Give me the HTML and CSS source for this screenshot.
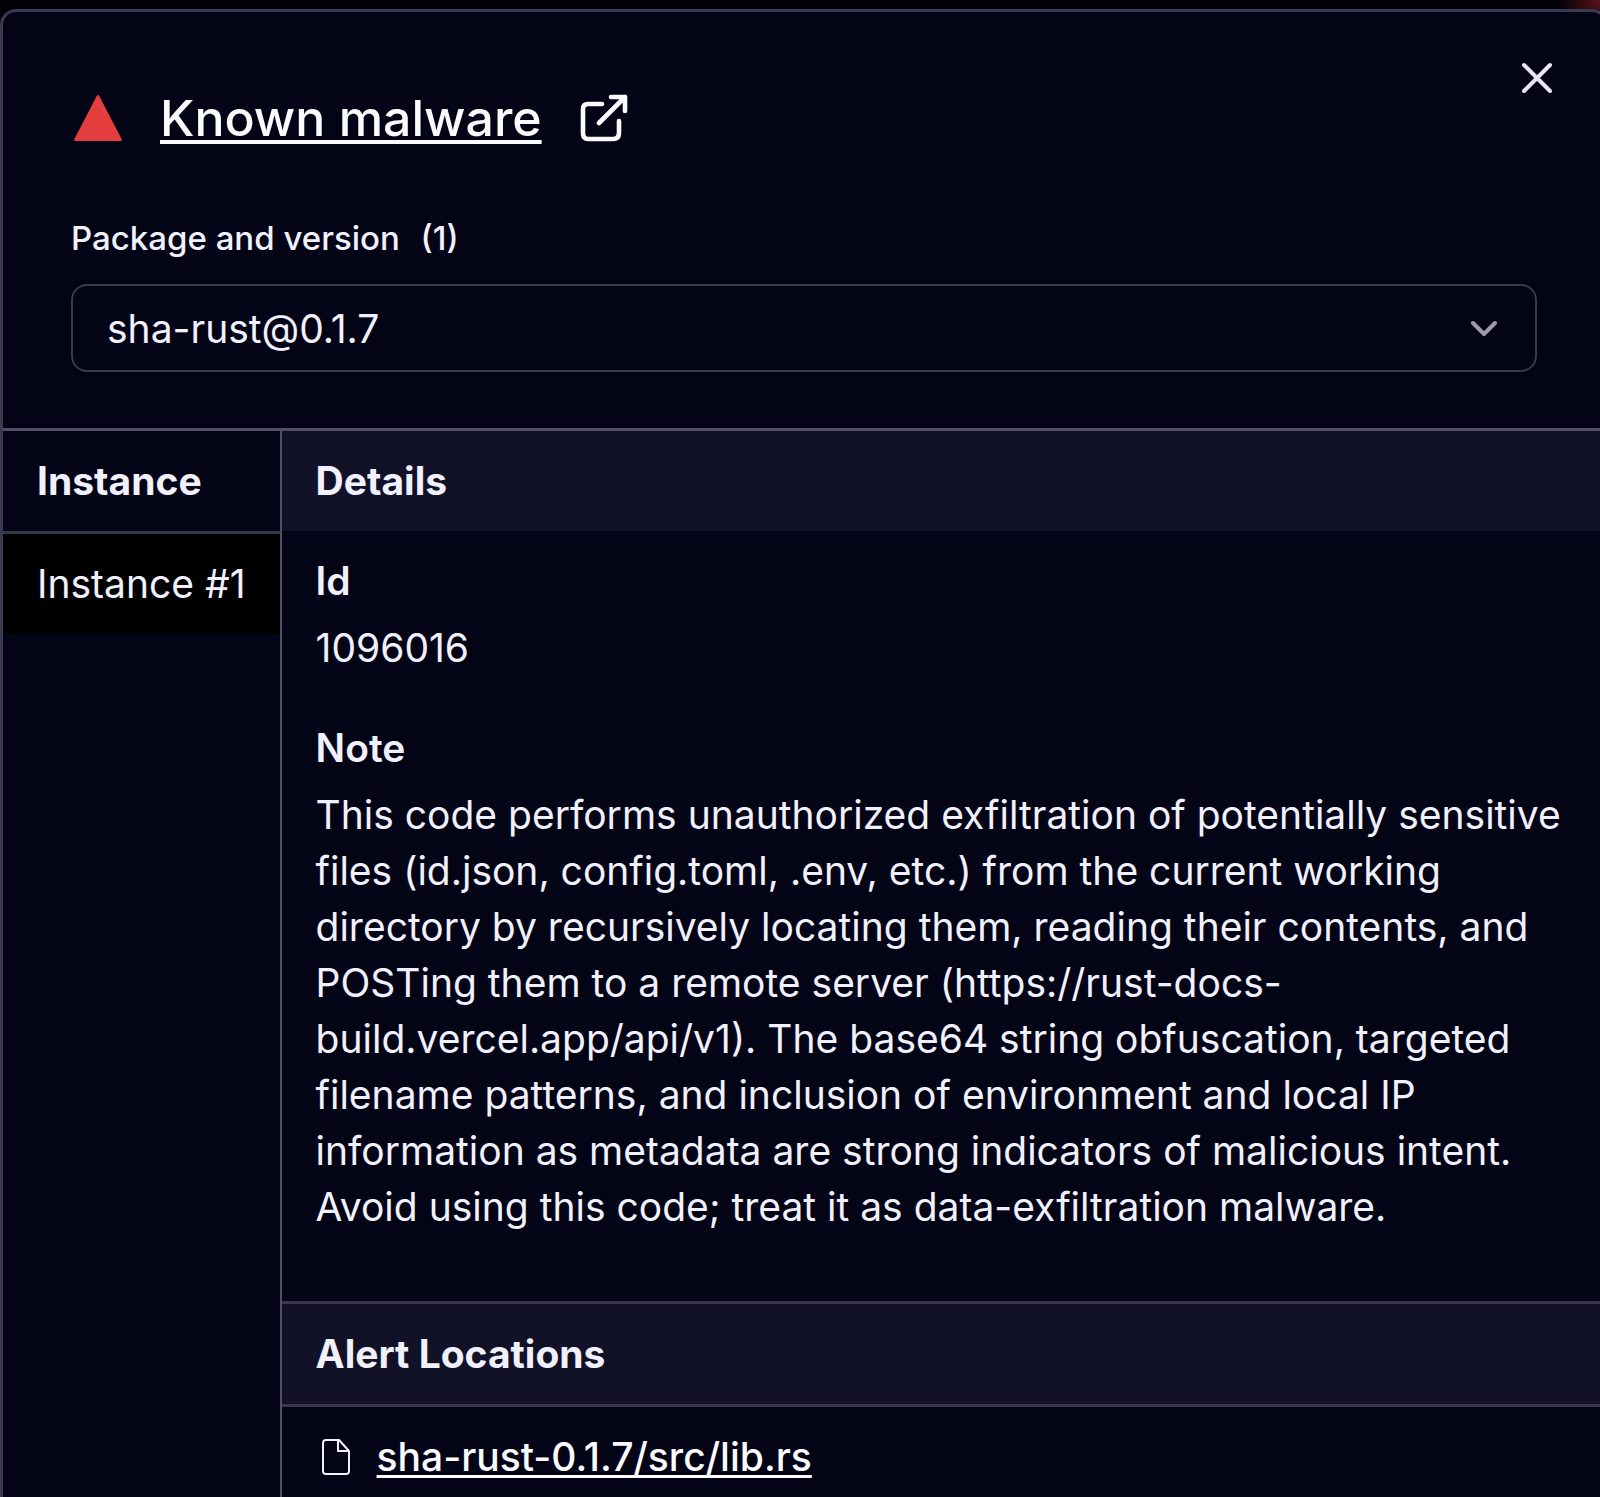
FILE: index.html
```html
<!DOCTYPE html>
<html lang="en">

<head>
    <meta charset="UTF-8">
    <meta name="viewport" content="width=device-width, initial-scale=1.0">
    <title>Known malware</title>
    <link rel="stylesheet" href="styles.css">
</head>

<body>

    <main class="panel">
        <header class="panel-header">
            <div class="title-row">
                <svg class="severity-icon" viewBox="0 0 48 46" aria-hidden="true">
                    <path d="M22.6 1.2Q24 -1 25.4 1.2L47.6 44Q48.4 46 46.6 46H1.4Q-0.4 46 0.4 44Z" fill="#e53e3e" />
                </svg>
                <h1><a href="#known-malware">Known malware</a></h1>
                <a class="external-link" href="#known-malware" aria-label="Open alert in a new tab">
                    <svg viewBox="0 0 48 48" fill="none" stroke="currentColor" stroke-width="4.6" stroke-linecap="round" stroke-linejoin="round">
                        <path d="M22 10H8Q3 10 3 15V39Q3 45 8 45H33Q39 45 39 39V27" />
                        <path d="M31 3H45V17M45 3L19 29" />
                    </svg>
                </a>
                <button type="button" class="close-button" aria-label="Close">
                    <svg viewBox="0 0 32 32" fill="none" stroke="currentColor" stroke-width="4" stroke-linecap="round">
                        <path d="M3 3L29 29M29 3L3 29" />
                    </svg>
                </button>
            </div>

            <label for="package">Package and version <span class="count">(1)</span></label>
            <div class="select-wrap">
                <select id="package" name="package">
                    <option>sha-rust@0.1.7</option>
                </select>
                <svg class="chevron" viewBox="0 0 28 16" fill="none" stroke="currentColor" stroke-width="4" stroke-linecap="round" stroke-linejoin="round">
                    <path d="M3 3L14 14L25 3" />
                </svg>
            </div>
        </header>

        <div class="panel-body">
            <nav class="instances">
                <h2 class="bar">Instance</h2>
                <a class="instance active" href="#instance-1">Instance #1</a>
            </nav>

            <section class="details" id="instance-1">
                <h2 class="bar">Details</h2>
                <dl class="fields">
                    <dt>Id</dt>
                    <dd>1096016</dd>
                    <dt>Note</dt>
                    <dd>This code performs unauthorized exfiltration of potentially sensitive files (id.json, config.toml, .env, etc.) from the current working directory by recursively locating them, reading their contents, and POSTing them to a remote server (https://rust-docs-build.vercel.app/api/v1). The base64 string obfuscation, targeted filename patterns, and inclusion of environment and local IP information as metadata are strong indicators of malicious intent. Avoid using this code; treat it as data-exfiltration malware.</dd>
                </dl>

                <h2 class="bar locations-bar">Alert Locations</h2>
                <div class="location">
                    <svg class="file-icon" viewBox="0 0 28 36" fill="none" stroke="currentColor" stroke-width="2" stroke-linejoin="round">
                        <path d="M4 1H17L27 12V32Q27 35 24 35H4Q1 35 1 32V4Q1 1 4 1Z" />
                        <path d="M16 1V12H27" />
                    </svg>
                    <a href="#lib-rs">sha-rust-0.1.7/src/lib.rs</a>
                </div>
            </section>
        </div>
    </main>

</body>

</html>
```
FILE: styles.css
```css
* {
    margin: 0;
    padding: 0;
    box-sizing: border-box;
}

body {
    font-family: "Inter", sans-serif;
    font-size: 39px;
    line-height: 56px;
    color: #f1f1fd;
    background: radial-gradient(circle at 100% 0, #5c1219 0, #020208 40px);
    background-color: #020208;
    display: flex;
    flex-direction: column;
    min-height: 100vh;
    padding-top: 9px;
    overflow: hidden;
}

a {
    color: inherit;
}

svg {
    display: block;
}

/* The drawer runs past the right edge of the window */
.panel {
    flex: 1;
    display: flex;
    flex-direction: column;
    margin-right: -8px;
    background-color: #030516;
    border: 3px solid #3c3a50;
    border-bottom: none;
    border-radius: 16px 16px 0 0;
}

.panel-header {
    padding: 44px 68px 56px;
    border-bottom: 3px solid #504f66;
}

.title-row {
    display: flex;
    align-items: flex-end;
    margin-bottom: 66px;
}

.severity-icon {
    width: 50px;
    height: 46px;
    margin: 0 37px 7px 2px;
}

h1 {
    font-size: 50px;
    line-height: 60px;
    font-weight: 500;
    color: #fbfbff;
}

h1 a {
    text-decoration-thickness: 4px;
    text-underline-offset: 4px;
}

.external-link {
    margin: 0 0 6px 38px;
    color: #fbfbff;
}

.external-link svg {
    width: 48px;
    height: 48px;
}

.close-button {
    align-self: flex-start;
    margin-left: auto;
    margin-right: -22px;
    margin-bottom: 48px;
    padding: 6px;
    background: none;
    border: none;
    color: #e6e6f6;
    cursor: pointer;
}

.close-button svg {
    width: 32px;
    height: 32px;
}

label {
    display: block;
    font-size: 33px;
    line-height: 48px;
    font-weight: 500;
    margin-bottom: 22px;
}

.count {
    margin-left: 12px;
}

.select-wrap {
    position: relative;
}

select {
    display: block;
    width: 100%;
    height: 88px;
    padding: 0 80px 0 34px;
    font-family: inherit;
    font-size: 39px;
    color: inherit;
    background: transparent;
    border: 2px solid #3a3a4d;
    border-radius: 16px;
    appearance: none;
}

select option {
    background-color: #030516;
}

.chevron {
    position: absolute;
    top: 36px;
    right: 39px;
    width: 28px;
    height: 16px;
    color: #9c9bb0;
    pointer-events: none;
}

.panel-body {
    flex: 1;
    display: flex;
}

.instances {
    flex: none;
    border-right: 2px solid #504f66;
}

.bar {
    font-size: 39px;
    line-height: 56px;
    font-weight: 700;
    padding: 22px 34px;
}

.instances .bar {
    border-bottom: 3px solid #373749;
}

.instance {
    display: block;
    padding: 22px 34px;
    text-decoration: none;
}

.instance.active {
    background-color: #000;
}

.details {
    flex: 1;
    min-width: 0;
}

.details .bar {
    background-color: #111128;
}

.fields {
    padding: 22px 34px 66px;
}

dt {
    font-weight: 600;
    margin-bottom: 11px;
}

dd + dt {
    margin-top: 44px;
}

.details .locations-bar {
    border-top: 3px solid #373749;
    border-bottom: 3px solid #373749;
}

.location {
    display: flex;
    align-items: center;
    padding: 22px 40px;
}

.location a {
    font-weight: 500;
    color: #fbfbff;
    text-decoration-thickness: 3px;
    text-underline-offset: 4px;
}

.file-icon {
    width: 28px;
    height: 36px;
    margin-right: 27px;
}
```
